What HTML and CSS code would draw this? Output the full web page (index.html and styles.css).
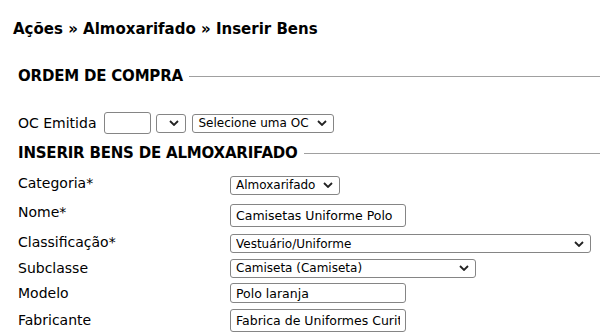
FILE: index.html
```html
<!DOCTYPE html>
<html lang="pt-BR">
<head>
    <meta charset="UTF-8">
    <title>Inserir Bens</title>
    <link rel="stylesheet" href="styles.css">
</head>
<body>

    <h1 class="trilha">Ações &raquo; Almoxarifado &raquo; Inserir Bens</h1>

    <form id="formBens">
        <fieldset class="secao">
            <legend>ORDEM DE COMPRA</legend>
            <div class="linha-oc">
                <label for="ocNumero">OC Emitida</label>
                <input type="text" id="ocNumero" class="campo-oc">
                <select id="ocAno" class="sel-ano"><option></option></select>
                <select id="ocLista" class="sel-oc"><option>Selecione uma OC</option></select>
            </div>
        </fieldset>

        <fieldset class="secao">
            <legend>INSERIR BENS DE ALMOXARIFADO</legend>
            <div class="grade">
                <label for="categoria" class="lin-cat">Categoria*</label>
                <div class="lin-cat">
                    <select id="categoria" class="sel-cat"><option>Almoxarifado</option></select>
                </div>

                <label for="nome" class="lin-nome">Nome*</label>
                <div class="lin-nome">
                    <input type="text" id="nome" class="campo" value="Camisetas Uniforme Polo">
                </div>

                <label for="classificacao" class="lin-class">Classificação*</label>
                <div class="lin-class">
                    <select id="classificacao" class="sel-class"><option>Vestuário/Uniforme</option></select>
                </div>

                <label for="subclasse" class="lin-sub">Subclasse</label>
                <div class="lin-sub">
                    <select id="subclasse" class="sel-sub"><option>Camiseta (Camiseta)</option></select>
                </div>

                <label for="modelo" class="lin-mod">Modelo</label>
                <div class="lin-mod">
                    <input type="text" id="modelo" class="campo campo-baixo" value="Polo laranja">
                </div>

                <label for="fabricante" class="lin-fab">Fabricante</label>
                <div class="lin-fab">
                    <input type="text" id="fabricante" class="campo" value="Fabrica de Uniformes Curitiba">
                </div>
            </div>
        </fieldset>
    </form>

</body>
</html>
```

FILE: styles.css
```css
body {
    font-family: 'DejaVu Sans', Verdana, sans-serif;
    color: #000;
    background-color: #fff;
    margin: 0;
    padding: 0 0 0 13px;
    overflow: hidden;
}

.trilha {
    font-size: 15px;
    font-weight: bold;
    line-height: 18px;
    margin: 20px 0 30px 0;
}

.secao {
    border: 0;
    border-top: 1px solid #a0a0a0;
    margin: 0 0 0 5px;
    padding: 0;
    min-width: 0;
}

.secao legend {
    font-size: 15px;
    font-weight: bold;
    line-height: 17px;
    padding: 0 6px 0 0;
    letter-spacing: -0.2px;
}

.linha-oc {
    display: flex;
    align-items: center;
    font-size: 14px;
    margin-top: 27px;
    margin-bottom: 11px;
}

.linha-oc label {
    margin-right: 8px;
}

input, select {
    font-family: 'DejaVu Sans', Verdana, sans-serif;
    color: #000;
    box-sizing: border-box;
    margin: 0;
}

input {
    font-size: 12.5px;
    border: 1px solid #858585;
    border-radius: 3px;
    padding: 1px 5px;
    height: 23px;
    background-color: #fff;
}

select {
    appearance: none;
    -webkit-appearance: none;
    font-size: 12px;
    height: 19px;
    padding: 0 20px 0 5px;
    border: 1px solid #858585;
    border-radius: 3px;
    background-color: #fff;
    background-image: url("data:image/svg+xml,%3Csvg xmlns='http://www.w3.org/2000/svg' width='10' height='6' viewBox='0 0 10 6'%3E%3Cpath d='M1 1l4 4 4-4' fill='none' stroke='%23222' stroke-width='1.8'/%3E%3C/svg%3E");
    background-repeat: no-repeat;
    background-position: right 6px center;
}

.campo-oc {
    width: 47px;
    height: 22px;
}

.sel-ano {
    width: 30px;
    margin-left: 5px;
}

.sel-oc {
    width: 142px;
    margin-left: 6px;
}

.grade {
    display: grid;
    grid-template-columns: 212px auto;
    align-items: center;
    font-size: 14px;
    margin-top: 9px;
}

.grade > div {
    display: flex;
    align-items: center;
}

.grade label {
    display: flex;
    align-items: center;
    box-sizing: border-box;
}

.lin-cat { height: 28px; }
.lin-nome { height: 32px; }
.lin-class { height: 25px; }
.lin-sub { height: 24px; }
.lin-mod { height: 26px; }
.lin-fab { height: 28px; }

label.lin-cat, label.lin-class {
    padding-bottom: 4px;
}

label.lin-nome {
    padding-bottom: 7px;
}

.campo {
    width: 176px;
}

.campo-baixo {
    height: 20px;
}

.sel-cat { width: 110px; }
.sel-class { width: 361px; }
.sel-sub { width: 246px; }
```
